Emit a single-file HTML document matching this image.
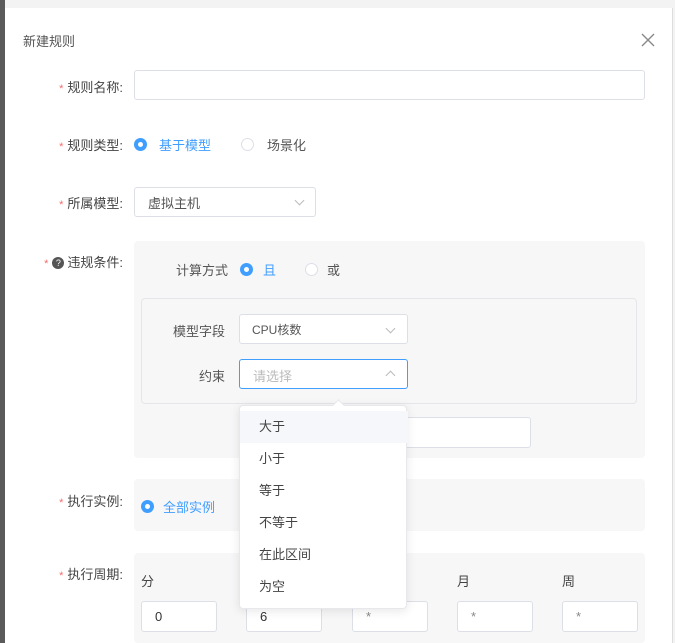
<!DOCTYPE html>
<html><head><meta charset="utf-8"><style>
body{margin:0;width:675px;height:643px;overflow:hidden;background:#fff;font-family:"Liberation Sans","Noto Sans CJK SC",sans-serif;font-size:13px;color:#333;position:relative}
.a{position:absolute}
.lbl{position:absolute;right:552px;color:#444;white-space:nowrap}
.lbl i{color:#f56c6c;font-style:normal;margin-right:4px;font-size:11px}
.inp{position:absolute;background:#fff;border:1px solid #dcdfe6;border-radius:3px;box-sizing:border-box}
.gray{position:absolute;background:#f7f7f8;border-radius:4px}
.radio{position:absolute;width:13px;height:13px;border-radius:50%;box-sizing:border-box}
.on{background:#409eff}
.on:after{content:"";position:absolute;left:4px;top:4px;width:5px;height:5px;border-radius:50%;background:#fff}
.off{border:1px solid #dcdfe6;background:#fff}
.chev{position:absolute;width:6px;height:6px;border-right:1px solid #bbb;border-bottom:1px solid #bbb}
.item{position:absolute;left:0;width:168px;height:32px;line-height:32px;padding-left:19px;box-sizing:border-box;color:#444}
</style></head><body>
<div class="a" style="left:0;top:0;width:675px;height:8px;background:#f3f3f4"></div>
<div class="a" style="left:0;top:0;width:5px;height:643px;background:#5a5a5a"></div>
<div class="a" style="left:672px;top:8px;width:1px;height:635px;background:#ddd"></div>
<div class="a" style="left:673px;top:0;width:2px;height:643px;background:#f3f3f4"></div>
<div class="a" style="left:23px;top:31px;color:#555">新建规则</div>
<svg class="a" style="left:641px;top:33px" width="14" height="14"><path d="M1 1L13 13M13 1L1 13" stroke="#888" stroke-width="1.4"/></svg>

<div class="lbl" style="top:77px"><i>*</i>规则名称:</div>
<div class="inp" style="left:134px;top:70px;width:511px;height:30px"></div>

<div class="lbl" style="top:135px"><i>*</i>规则类型:</div>
<div class="radio on" style="left:134px;top:138px"></div>
<div class="a" style="left:159px;top:135px;color:#409eff">基于模型</div>
<div class="radio off" style="left:241px;top:138px"></div>
<div class="a" style="left:267px;top:135px;color:#555">场景化</div>

<div class="lbl" style="top:193px"><i>*</i>所属模型:</div>
<div class="inp" style="left:134px;top:187px;width:182px;height:30px"></div>
<div class="a" style="left:148px;top:193px;color:#555">虚拟主机</div>
<div class="chev" style="left:296px;top:197px;transform:rotate(45deg)"></div>

<div class="lbl" style="top:252px"><i>*</i><span style="display:inline-block;width:12px;height:12px;border-radius:50%;background:#555;color:#fff;font-size:9px;line-height:12px;text-align:center;margin-right:3px;vertical-align:1px">?</span>违规条件:</div>
<div class="gray" style="left:134px;top:241px;width:511px;height:217px"></div>
<div class="a" style="left:176px;top:260px;color:#555">计算方式</div>
<div class="radio on" style="left:240px;top:263px"></div>
<div class="a" style="left:263px;top:260px;color:#409eff">且</div>
<div class="radio off" style="left:305px;top:263px"></div>
<div class="a" style="left:327px;top:260px;color:#555">或</div>
<div class="a" style="left:141px;top:298px;width:496px;height:106px;border:1px solid #e4e6ea;border-radius:4px;box-sizing:border-box"></div>
<div class="a" style="left:173px;top:321px;color:#555">模型字段</div>
<div class="inp" style="left:239px;top:314px;width:169px;height:30px"></div>
<div class="a" style="left:252px;top:321px;color:#555;font-size:12px">CPU核数</div>
<div class="chev" style="left:387px;top:325px;transform:rotate(45deg)"></div>
<div class="a" style="left:199px;top:366px;color:#555">约束</div>
<div class="inp" style="left:239px;top:359px;width:169px;height:30px;border-color:#409eff"></div>
<div class="a" style="left:253px;top:366px;color:#bbb">请选择</div>
<div class="chev" style="left:387px;top:372px;transform:rotate(-135deg)"></div>
<div class="inp" style="left:395px;top:417px;width:136px;height:31px"></div>
<div class="a" style="left:406px;top:425px;width:2px;height:14px;background:#a0cfff"></div>

<div class="lbl" style="top:491px"><i>*</i>执行实例:</div>
<div class="gray" style="left:134px;top:479px;width:511px;height:52px"></div>
<div class="radio on" style="left:141px;top:500px"></div>
<div class="a" style="left:163px;top:497px;color:#409eff">全部实例</div>

<div class="lbl" style="top:564px"><i>*</i>执行周期:</div>
<div class="gray" style="left:134px;top:553px;width:511px;height:90px"></div>
<div class="a" style="left:141px;top:571px;color:#444">分</div>
<div class="a" style="left:457px;top:571px;color:#444">月</div>
<div class="a" style="left:562px;top:571px;color:#444">周</div>
<div class="inp" style="left:141px;top:601px;width:76px;height:31px"></div><div class="a" style="left:155px;top:609px">0</div>
<div class="inp" style="left:246px;top:601px;width:76px;height:31px"></div><div class="a" style="left:260px;top:609px">6</div>
<div class="inp" style="left:352px;top:601px;width:76px;height:31px"></div><div class="a" style="left:366px;top:609px;color:#888">*</div>
<div class="inp" style="left:457px;top:601px;width:76px;height:31px"></div><div class="a" style="left:471px;top:609px;color:#888">*</div>
<div class="inp" style="left:562px;top:601px;width:76px;height:31px"></div><div class="a" style="left:576px;top:609px;color:#888">*</div>

<div class="a" style="left:239px;top:405px;width:168px;height:204px;background:#fff;border:1px solid #e8e8ec;border-radius:4px;box-shadow:0 2px 10px rgba(0,0,0,.1);box-sizing:border-box">
<div class="a" style="left:94px;top:-5px;width:8px;height:8px;background:#fff;transform:rotate(45deg);border-left:1px solid #e8e8ec;border-top:1px solid #e8e8ec"></div>
<div class="item" style="top:5px;background:#f5f7fa">大于</div>
<div class="item" style="top:37px">小于</div>
<div class="item" style="top:69px">等于</div>
<div class="item" style="top:101px">不等于</div>
<div class="item" style="top:133px">在此区间</div>
<div class="item" style="top:165px">为空</div>
</div>
</body></html>
